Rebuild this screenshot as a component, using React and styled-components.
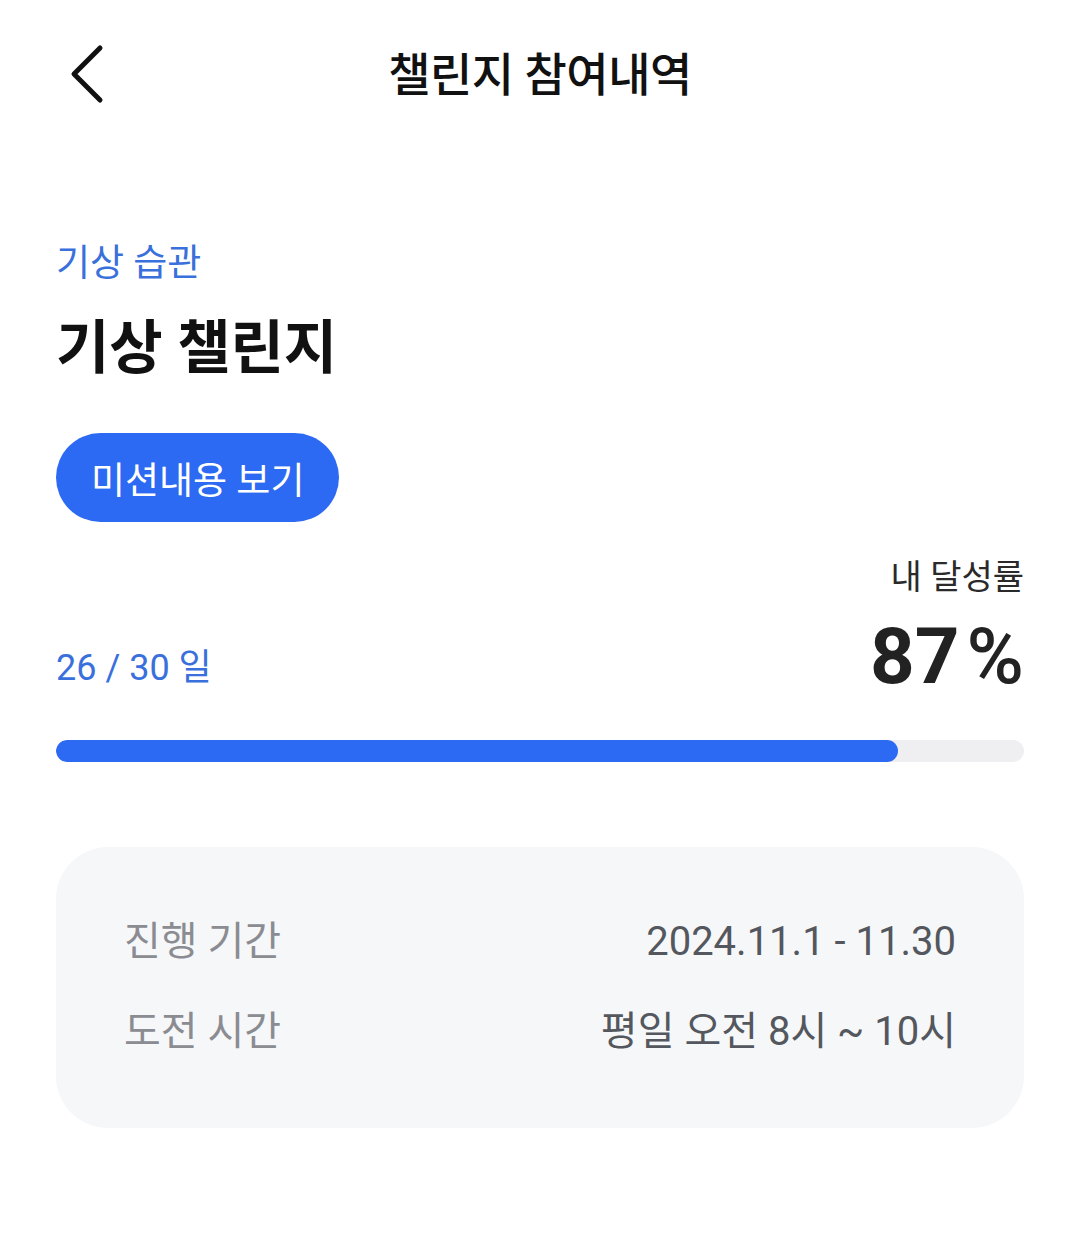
import React from 'react';
import styled, { createGlobalStyle } from 'styled-components';

const GlobalStyle = createGlobalStyle`
    body {
        margin: 0;
        background: #ffffff;
        font-family: Roboto, "Noto Sans CJK KR", sans-serif;
    }
`;

const Page = styled.div`
    width: 1080px;
    min-height: 1240px;
    background: #fff;
`;

const Header = styled.header`
    position: relative;
    height: 146px;
    display: flex;
    align-items: center;
    justify-content: center;
`;

const BackButton = styled.button`
    position: absolute;
    left: 62px;
    top: 42px;
    width: 50px;
    height: 64px;
    padding: 0;
    border: none;
    background: transparent;
    display: flex;
    align-items: center;
    justify-content: center;
`;

const Title = styled.h1`
    margin: 0 0 4px;
    font-size: 46px;
    font-weight: 500;
    color: #111;
    letter-spacing: -0.5px;
`;

const Content = styled.main`
    padding: 96px 56px 0;
`;

const Category = styled.div`
    font-size: 37px;
    line-height: 44px;
    color: #3a70db;
`;

const Name = styled.h2`
    margin: 28px 0 0;
    font-size: 58px;
    line-height: 68px;
    font-weight: 700;
    color: #111;
`;

const MissionButton = styled.button`
    margin-top: 51px;
    height: 89px;
    padding: 0 35px;
    border: none;
    border-radius: 45px;
    background: #2d6af3;
    color: #fff;
    font-family: inherit;
    font-size: 37px;
    font-weight: 400;
`;

const StatRow = styled.div`
    margin-top: 33px;
    display: flex;
    justify-content: space-between;
    align-items: flex-end;
`;

const Days = styled.div`
    font-size: 36px;
    color: #3a70db;
    margin-bottom: 12px;
`;

const Rate = styled.div`
    display: flex;
    flex-direction: column;
    align-items: flex-end;
`;

const RateLabel = styled.div`
    font-size: 34px;
    line-height: 44px;
    color: #2a2a2a;
`;

const RateValue = styled.div`
    font-size: 78px;
    line-height: 90px;
    font-weight: 700;
    color: #222;
    margin-top: 13px;
`;

const Percent = styled.span`
    margin-left: 7px;
    font-weight: 500;
`;

const Track = styled.div`
    margin-top: 38px;
    height: 22px;
    border-radius: 11px;
    background: #efeff2;
    overflow: hidden;
`;

const Fill = styled.div`
    height: 100%;
    border-radius: 11px;
    background: #2d6af3;
`;

const InfoCard = styled.section`
    margin-top: 85px;
    height: 281px;
    box-sizing: border-box;
    padding: 72px 68px;
    border-radius: 52px;
    background: #f6f7f9;
    display: flex;
    flex-direction: column;
    gap: 44px;
`;

const InfoRow = styled.div`
    display: flex;
    justify-content: space-between;
    align-items: center;
    font-size: 40px;
    line-height: 46px;
`;

const InfoLabel = styled.span`
    color: #8b8c92;
`;

const InfoValue = styled.span`
    color: #54575e;
`;

const ChevronLeft = () => (
    <svg width="36" height="60" viewBox="0 0 36 60" fill="none">
        <path d="M31 4 L5 30 L31 56" stroke="#111" strokeWidth="5" strokeLinecap="round" strokeLinejoin="round" />
    </svg>
);

const info = [
    { label: '진행 기간', value: '2024.11.1 - 11.30' },
    { label: '도전 시간', value: '평일 오전 8시 ~ 10시' },
];

export default function App() {
    const done = 26;
    const total = 30;
    const progress = 87;

    return (
        <Page>
            <GlobalStyle />
            <Header>
                <BackButton aria-label="뒤로">
                    <ChevronLeft />
                </BackButton>
                <Title>챌린지 참여내역</Title>
            </Header>
            <Content>
                <Category>기상 습관</Category>
                <Name>기상 챌린지</Name>
                <MissionButton>미션내용 보기</MissionButton>
                <StatRow>
                    <Days>{done} / {total} 일</Days>
                    <Rate>
                        <RateLabel>내 달성률</RateLabel>
                        <RateValue>{progress}<Percent>%</Percent></RateValue>
                    </Rate>
                </StatRow>
                <Track>
                    <Fill style={{ width: `${progress}%` }} />
                </Track>
                <InfoCard>
                    {info.map((row) => (
                        <InfoRow key={row.label}>
                            <InfoLabel>{row.label}</InfoLabel>
                            <InfoValue>{row.value}</InfoValue>
                        </InfoRow>
                    ))}
                </InfoCard>
            </Content>
        </Page>
    );
}
